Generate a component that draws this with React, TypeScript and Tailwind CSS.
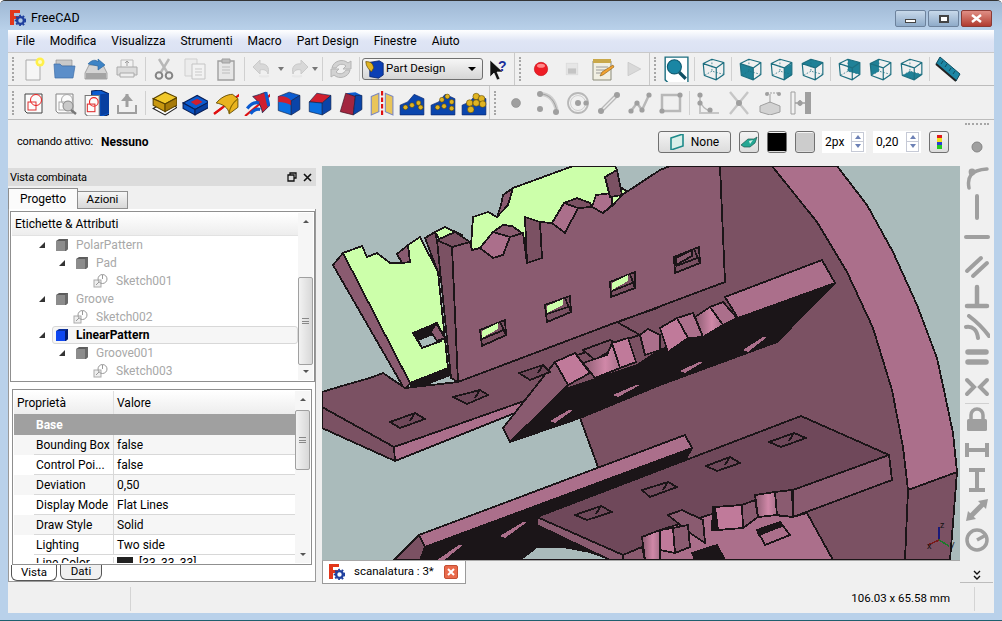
import React from 'react';

type P = { children?: React.ReactNode };
const Svg = ({ children, s = 24 }: P & { s?: number }) => (
  <svg width={s} height={s} viewBox="0 0 24 24" fill="none">{children}</svg>
);

const G = '#9f9f9f';
const GD = '#858585';
const TEAL = '#1d6f80';

const Logo = ({ s = 16 }: { s?: number }) => (
  <svg width={s} height={s} viewBox="0 0 16 16">
    <path d="M0 0h10v3H4v3h5v3H4v6H0z" fill="#e2361a" />
    <circle cx="10.5" cy="10.5" r="3.4" fill="none" stroke="#1f3f9e" strokeWidth="2.4" />
    <circle cx="10.5" cy="10.5" r="5" fill="none" stroke="#1f3f9e" strokeWidth="1.6" strokeDasharray="1.8 1.8" />
  </svg>
);

// view cube, the faces are filled according to the view
const ViewCube = ({ face }: { face?: string }) => (
  <Svg s={26}>
    {face === 'front' && <path d="M3 7l12 4v11L4 18z" fill="#1f8197" />}
    {face === 'right' && <path d="M15 11l7-4v11l-7 4z" fill="#1f8197" />}
    {face === 'top' && <path d="M3 7l8-4 11 3-7 5z" fill="#1f8197" />}
    {face === 'rear' && <path d="M11 3l11 3v11L11 14z" fill="#1f8197" />}
    {face === 'left' && <path d="M3 7l8-4v11l-7 4z" fill="#1f8197" />}
    {face === 'bottom' && <path d="M4 18l7-4 11 3-7 5z" fill="#1f8197" />}
    <path d="M3 7l8-4 11 3v11l-7 5-11-4zM3 7l12 4 7-5M15 11v11" stroke={TEAL} strokeWidth="1.1" strokeLinejoin="round" />
    <path d="M11 3v11l11 3M11 14l-7 4" stroke={TEAL} strokeWidth=".7" strokeDasharray="1.5 1.5" />
  </Svg>
);

const Page = ({ faded }: { faded?: boolean }) => (
  <>
    <path d="M3 3h17v19H5l-2-2z" fill="#fbfbfb" stroke={faded ? GD : '#444'} />
    <rect x="6" y="11" width="8" height="8" fill="none" stroke={faded ? '#a8a8a8' : '#d33'} />
    <circle cx="14" cy="9" r="5.5" fill="none" stroke={faded ? '#a8a8a8' : '#e22'} />
  </>
);

const Pattern = ({ n }: { n: number }) => (
  <Svg s={26}>
    <path d="M1 14l7-3 6-7 9 4v15H1z" fill="#0a45ad" stroke="#08246a" strokeWidth=".6" />
    {(n === 1
      ? [[6, 16], [12, 14], [18, 12], [20, 16]]
      : n === 2
        ? [[7, 16], [11, 9], [16, 6], [20, 11], [20, 17], [13, 15]]
        : [[8, 12], [14, 6], [19, 8], [14, 12], [20, 13], [9, 18]]
    ).map(([x, y], i) => (
      <circle key={i} cx={x} cy={y} r={n === 3 ? 3 : 2.2} fill="#e0b422" stroke="#5a4300" strokeWidth=".5" />
    ))}
  </Svg>
);

const icons: Record<string, React.ReactNode> = {
  new: (
    <Svg>
      <path d="M4 3h14v20H4z" fill="#f6f6f6" stroke="#aaa" />
      <circle cx="18" cy="5" r="4.5" fill="#fff04a" />
      <circle cx="18" cy="5" r="2" fill="#fffdc0" />
    </Svg>
  ),
  open: (
    <Svg>
      <path d="M3 3h16v6H3z" fill="#c9c9c9" stroke="#888" strokeWidth=".6" />
      <path d="M1 7h6l2 2h13l-2 12H2z" fill="#5b8ec9" stroke="#3d6da8" strokeWidth=".7" />
    </Svg>
  ),
  save: (
    <Svg>
      <path d="M1 16l4-8h14l4 8v6H1z" fill="#d4d4d4" stroke="#888" strokeWidth=".7" />
      <path d="M2 16h20v6H2z" fill="#a4a4a4" />
      <path d="M4 7c3-4 8-5 10-2v-3l7 6-7 5V9c-3-1-7-1-10-2z" fill="#3d84c6" stroke="#215e99" strokeWidth=".6" />
    </Svg>
  ),
  print: (
    <Svg>
      <path d="M6 3h12v8H6z" fill="#f2f2f2" stroke="#bbb" />
      <path d="M2 10h20v8H2z" fill="#dcdcdc" stroke="#aaa" />
      <path d="M5 16h14v4H5z" fill="#eee" stroke="#aaa" />
      <path d="M12 4v5M10 6l2-2 2 2" stroke={G} />
    </Svg>
  ),
  cut: (
    <Svg>
      <path d="M7 2l8 13M17 2L9 15" stroke="#b8b8b8" strokeWidth="2.4" />
      <circle cx="7" cy="18.5" r="3.3" stroke={GD} strokeWidth="2" />
      <circle cx="17" cy="18.5" r="3.3" stroke={GD} strokeWidth="2" />
    </Svg>
  ),
  copy: (
    <Svg>
      <path d="M2 2h12v17H2z" fill="#ececec" stroke="#cfcfcf" />
      <path d="M9 7h13v15H9z" fill="#f2f2f2" stroke="#c4c4c4" />
      <path d="M12 12h7M12 15h7M12 18h7" stroke="#c9c9c9" />
    </Svg>
  ),
  paste: (
    <Svg>
      <path d="M4 4h16v19H4z" fill="#e6e6e6" stroke={G} strokeWidth="1.4" />
      <path d="M8 2h8v4H8z" fill="#bcbcbc" stroke={G} />
      <path d="M8 10h8M8 13h8M8 16h8" stroke="#bcbcbc" />
    </Svg>
  ),
  undo: (
    <Svg>
      <path d="M9 3L2 10l7 7v-4c4-1 7 0 8 4 2-7-2-11-8-10z" fill="#d8d8d8" stroke="#cacaca" />
      <path d="M8 19a8 2 0 0 0 10 0" stroke="#e8e8e8" strokeWidth="2" />
    </Svg>
  ),
  redo: (
    <Svg>
      <path d="M15 3l7 7-7 7v-4c-4-1-7 0-8 4-2-7 2-11 8-10z" fill="#d8d8d8" stroke="#cacaca" />
      <path d="M16 19a8 2 0 0 1-10 0" stroke="#e8e8e8" strokeWidth="2" />
    </Svg>
  ),
  refresh: (
    <Svg>
      <path d="M3 11C4 4 14 1 19 6l3-2v8h-8l3-3c-3-3-8-2-10 2zM21 13c-1 7-11 10-16 5l-3 2v-8h8l-3 3c3 3 8 2 10-2z" fill="#d2d2d2" stroke="#b4b4b4" />
    </Svg>
  ),
  help: (
    <svg width="20" height="22" viewBox="0 0 20 22">
      <path d="M1 2v17l4-4 3 7 3-1-3-7h6z" fill="#111" stroke="#fff" strokeWidth=".6" />
      <text x="9" y="13" fontSize="14" fontWeight="700" fontFamily="'Liberation Sans', sans-serif" fill="#1b2f9c">?</text>
    </svg>
  ),
  record: (
    <Svg s={16}>
      <circle cx="12" cy="12" r="10" fill="#ee1c25" stroke="#c9151d" />
      <ellipse cx="12" cy="7" rx="6" ry="3" fill="#f88" />
    </Svg>
  ),
  stop: (
    <Svg s={14}>
      <rect x="2" y="2" width="20" height="20" fill="#e6e6e6" stroke="#d6d6d6" />
      <rect x="5" y="11" width="14" height="9" fill="#c4c4c4" />
    </Svg>
  ),
  macro: (
    <Svg>
      <path d="M2 4h18v19H2z" fill="#f1efe2" stroke="#8b8b7a" />
      <path d="M2 2h18v4H2z" fill="#c9a84a" />
      <path d="M5 10h12M5 13h10M5 16h7" stroke="#9a9a9a" />
      <path d="M9 19l2-4 11-7 1 2-11 8z" fill="#f2a332" stroke="#8a5a10" strokeWidth=".6" />
    </Svg>
  ),
  play: (
    <Svg s={18}>
      <path d="M4 3l17 9-17 9z" fill="#d9d9d9" stroke="#c6c6c6" />
    </Svg>
  ),
  fit: (
    <Svg s={26}>
      <path d="M2 1h21v24H5l-3-3z" fill="#fff" stroke={TEAL} strokeWidth="1.3" />
      <circle cx="10.5" cy="10" r="6.5" fill="#1a86a4" stroke="#0e5a70" />
      <path d="M15 15l6 6" stroke="#0e4f63" strokeWidth="3" />
    </Svg>
  ),
  ruler: (
    <svg width="26" height="26" viewBox="0 0 26 26">
      <path d="M5 1l20 17-4 7L1 8z" fill="#1c87a5" stroke="#0f4c5e" />
      <path d="M1 8l20 17" stroke="#222" strokeWidth="2" />
      <path d="M8 5l-2 3M12 8l-2 3M16 12l-2 3M20 15l-2 3" stroke="#0f4c5e" />
    </svg>
  ),
  sketch: (
    <Svg>
      <Page />
    </Svg>
  ),
  viewsketch: (
    <Svg>
      <Page faded />
      <circle cx="15" cy="15" r="5" fill="#c9c9c9" stroke="#888" />
      <path d="M18 19l5 4" stroke="#777" strokeWidth="2.5" />
    </Svg>
  ),
  mapsketch: (
    <Svg s={26}>
      <path d="M8 1l8-1 9 4v18l-7 3-10-3z" fill="#0b5bd0" stroke="#0a1f55" />
      <path d="M16 4l9-1v18l-9 3z" fill="#083fa0" />
      <path d="M2 5h13v19H4l-2-2z" fill="#fbfbfb" stroke="#777" />
      <rect x="4" y="13" width="7" height="7" fill="none" stroke="#d33" />
      <circle cx="10" cy="11" r="4" fill="none" stroke="#e22" />
    </Svg>
  ),
  leave: (
    <Svg>
      <path d="M12 3v13" stroke={G} strokeWidth="3" />
      <path d="M6 10l6-7 6 7z" fill={G} />
      <path d="M3 14v8h18v-8" stroke={G} strokeWidth="2" />
    </Svg>
  ),
  pad: (
    <Svg s={26}>
      <path d="M2 17l11-6 11 5-11 7z" fill="#fff" stroke="#222" />
      <path d="M2 8l11-6 11 5-11 6z" fill="#f1c82a" stroke="#5a4300" />
      <path d="M2 8v6l11 6v-7z" fill="#c8970f" stroke="#5a4300" />
      <path d="M13 13v7l11-6V7z" fill="#a67a08" stroke="#5a4300" />
    </Svg>
  ),
  pocket: (
    <Svg s={26}>
      <path d="M1 12l13-7 11 6-13 7z" fill="#0b5bd0" stroke="#0a1f55" />
      <path d="M8 11l6-3 5 3-6 3z" fill="#d01f2e" />
      <path d="M1 12v5l11 6v-5z" fill="#0a55c4" stroke="#0a1f55" />
      <path d="M12 18v5l13-7v-5z" fill="#083fa0" stroke="#0a1f55" />
    </Svg>
  ),
  revolve: (
    <Svg s={26}>
      <path d="M1 22L25 4" stroke="#e01010" strokeWidth="2" />
      <path d="M3 12c4-5 10-8 15-8l5 4v8l-8 6c-1-6-6-9-12-10z" fill="#e9b41f" stroke="#5a4300" strokeWidth=".8" />
      <path d="M15 22c0-5 2-9 8-14" stroke="#8a6a00" strokeWidth="1" />
      <path d="M1 22L9 16" stroke="#e01010" strokeWidth="2" />
    </Svg>
  ),
  groove: (
    <Svg s={26}>
      <path d="M1 24L25 4" stroke="#e01010" strokeWidth="2" />
      <path d="M8 6c4-1 9-3 12-4l3 13-6 6c-1-6-4-11-9-15z" fill="#d01f2e" stroke="#10204a" strokeWidth=".7" />
      <path d="M3 17c4-5 8-6 11-5M6 22c3-4 6-5 9-4" stroke="#0b5bd0" strokeWidth="3" />
      <path d="M20 2l3 13" stroke="#0b5bd0" strokeWidth="3" />
    </Svg>
  ),
  fillet: (
    <Svg s={26}>
      <path d="M3 6l10-4 10 3-8 5z" fill="#0b5bd0" stroke="#10204a" strokeWidth=".6" />
      <path d="M3 6l12 4v13L3 19z" fill="#0b6fe0" stroke="#10204a" strokeWidth=".6" />
      <path d="M3 6c5-1 10 1 12 4v4c-4-2-8-3-12-3z" fill="#d01f2e" />
      <path d="M15 10l8-5v13l-8 5z" fill="#0a44a8" stroke="#10204a" strokeWidth=".6" />
    </Svg>
  ),
  chamfer: (
    <Svg s={26}>
      <path d="M3 11l7-8 13 2-8 7z" fill="#d01f2e" stroke="#10204a" strokeWidth=".6" />
      <path d="M3 11l12 1v11L3 20z" fill="#0b6fe0" stroke="#10204a" strokeWidth=".6" />
      <path d="M15 12l8-7v13l-8 5z" fill="#0a44a8" stroke="#10204a" strokeWidth=".6" />
    </Svg>
  ),
  draft: (
    <Svg s={26}>
      <path d="M8 3l9-1 6 3-6 2z" fill="#0b5bd0" />
      <path d="M8 3l9 3-2 17-12-3z" fill="#a3263f" stroke="#3b1020" strokeWidth=".6" />
      <path d="M17 5l6 0v13l-8 5z" fill="#0a44a8" stroke="#10204a" strokeWidth=".6" />
    </Svg>
  ),
  mirror: (
    <Svg s={26}>
      <path d="M3 6l7-3v17l-7 3z" fill="#e9c55a" stroke="#7a86c0" />
      <path d="M23 6l-7-3v17l7 3z" fill="#e9c55a" stroke="#7a86c0" />
      <path d="M13 1v24" stroke="#e01010" strokeWidth="2" strokeDasharray="4 2" />
    </Svg>
  ),
  linear: <Pattern n={1} />,
  polar: <Pattern n={2} />,
  multi: <Pattern n={3} />,
  point: (
    <Svg s={12}>
      <circle cx="12" cy="12" r="9" fill={G} stroke={GD} />
    </Svg>
  ),
  arcpts: (
    <Svg>
      <path d="M5 3c9 0 15 6 17 18" stroke="#cdcdcd" strokeWidth="4" />
      <path d="M5 3c9 0 15 6 17 18" stroke={G} strokeWidth="1" />
      <circle cx="5" cy="3" r="3" fill={G} />
      <circle cx="5" cy="18" r="3" fill={G} />
      <circle cx="21" cy="21" r="3" fill={G} />
    </Svg>
  ),
  circle: (
    <Svg>
      <circle cx="12" cy="12" r="10" stroke="#b8b8b8" strokeWidth="1.8" />
      <circle cx="12" cy="12" r="7.5" stroke="#d0d0d0" />
      <circle cx="12" cy="12" r="3" fill={G} />
      <circle cx="20" cy="12" r="2.6" fill={G} />
    </Svg>
  ),
  line: (
    <Svg>
      <path d="M3 21L20 4" stroke="#b8b8b8" strokeWidth="4" />
      <path d="M3 21L20 4" stroke="#eee" strokeWidth="1.5" />
      <circle cx="4" cy="20" r="3" fill={G} />
      <circle cx="20" cy="4" r="3" fill={G} />
    </Svg>
  ),
  polyline: (
    <Svg>
      <path d="M3 20l6-8 5 7 7-15" stroke="#b8b8b8" strokeWidth="2.5" />
      <circle cx="3" cy="20" r="2.6" fill={G} />
      <circle cx="9" cy="12" r="2.6" fill={G} />
      <circle cx="14" cy="19" r="2.6" fill={G} />
      <circle cx="21" cy="4" r="2.6" fill={G} />
    </Svg>
  ),
  rect: (
    <Svg>
      <rect x="3" y="4" width="18" height="16" stroke="#b8b8b8" strokeWidth="2.5" />
      <circle cx="21" cy="4" r="2.6" fill={G} />
      <circle cx="3" cy="20" r="2.6" fill={G} />
    </Svg>
  ),
  fillet2: (
    <Svg>
      <path d="M4 3v19h19" stroke="#c6c6c6" strokeWidth="2" />
      <path d="M4 9c1 6 6 10 12 12" stroke="#b8b8b8" strokeWidth="1.5" />
      <circle cx="4" cy="4" r="2.6" fill={G} />
      <circle cx="4" cy="12" r="2.6" fill={G} />
      <circle cx="14" cy="19" r="2.6" fill={G} />
    </Svg>
  ),
  trim: (
    <Svg>
      <path d="M3 1l18 22M21 1L3 23" stroke="#c6c6c6" strokeWidth="2.4" />
      <circle cx="12" cy="12" r="3" fill={G} />
    </Svg>
  ),
  external: (
    <Svg>
      <path d="M2 15l10-4 10 4v6l-10 3-10-3z" fill="#d2d2d2" stroke={G} />
      <path d="M9 2h12" stroke={G} strokeDasharray="2 1" />
      <circle cx="9" cy="3" r="2" fill={G} />
      <circle cx="21" cy="3" r="2" fill={G} />
      <path d="M12 3v9" stroke={G} />
    </Svg>
  ),
  carbon: (
    <Svg>
      <path d="M2 1h4v22H2z" fill="#f2f2f2" stroke={G} />
      <path d="M16 1h6v22h-6z" fill={G} />
      <path d="M6 12h10M11 9v6" stroke={G} strokeWidth="1.6" />
      <circle cx="11" cy="12" r="2.6" fill={G} />
    </Svg>
  ),
};

const Slot = ({ n, w = 31 }: { n?: string; w?: number }) => (
  <div className="flex items-center justify-center shrink-0 h-full" style={{ width: w }}>
    {n && icons[n]}
  </div>
);
const Sep = () => (
  <div className="w-[6px] h-full flex justify-center items-center shrink-0">
    <div className="w-px h-[24px] bg-[#d0d0d0]" />
  </div>
);
const Handle = () => (
  <div className="w-[10px] shrink-0 h-full flex justify-center items-center">
    <div className="h-[24px] w-[3px] border-l-2 border-dotted border-[#a6a6a6]" />
  </div>
);
const DropArrow = ({ w }: { w: number }) => (
  <div className="flex items-center justify-center shrink-0 h-full" style={{ width: w }}>
    <div className="w-0 h-0 border-x-[3px] border-x-transparent border-t-[4px] border-t-[#777]" />
  </div>
);
const ViewBtn = ({ face }: { face?: string }) => (
  <div className="w-[31px] h-full flex items-center justify-center shrink-0"><ViewCube face={face} /></div>
);

const Toolbar1 = () => (
  <div className="h-[34px] flex items-center bg-[#f0f0f0] border-b border-[#bcbcbc] border-t border-t-[#c9c9c9]">
    <Handle />
    <Slot n="new" /><Slot n="open" /><Slot n="save" /><Slot n="print" />
    <Sep />
    <Slot n="cut" /><Slot n="copy" /><Slot n="paste" />
    <Sep />
    <Slot n="undo" /><DropArrow w={6} /><Slot n="redo" w={27} /><DropArrow w={8} />
    <Sep />
    <Slot n="refresh" />
    <Sep />
    <div className="w-[121px] h-[22px] shrink-0 flex items-center rounded-[3px] border border-[#6f6f6f] bg-gradient-to-b from-[#f6f6f6] to-[#d6d6d6] pl-[2px]">
      <svg width="19" height="19" viewBox="0 0 24 24" className="shrink-0">
        <path d="M6 3l12-2 5 3v15l-6 4-11-2z" fill="#0b3fb4" stroke="#08246a" />
        <path d="M1 2c7 0 9 3 10 8l-3 5C5 12 1 8 1 2z" fill="#e0b422" stroke="#5a4300" strokeWidth=".8" />
      </svg>
      <span className="ml-[2px] flex-1 text-black text-[11.5px]">Part Design</span>
      <div className="mr-[6px] w-0 h-0 border-x-[4px] border-x-transparent border-t-[4px] border-t-black" />
    </div>
    <Slot n="help" />
    <div className="w-px h-full bg-[#c9c9c9]" />
    <Handle />
    <Slot n="record" /><Slot n="stop" /><Slot n="macro" /><Slot n="play" />
    <div className="w-px h-full bg-[#c9c9c9]" />
    <Handle />
    <Slot n="fit" />
    <Sep />
    <ViewBtn />
    <Sep />
    <ViewBtn face="front" /><ViewBtn face="right" /><ViewBtn face="top" />
    <Sep />
    <ViewBtn face="rear" /><ViewBtn face="left" /><ViewBtn face="bottom" />
    <Sep />
    <Slot n="ruler" />
  </div>
);

const Toolbar2 = () => (
  <div className="h-[34px] flex items-center bg-[#f0f0f0] border-b border-[#bcbcbc]">
    <Handle />
    <Slot n="sketch" /><Slot n="viewsketch" /><Slot n="mapsketch" /><Slot n="leave" />
    <Sep />
    {['pad', 'pocket', 'revolve', 'groove', 'fillet', 'chamfer', 'draft', 'mirror', 'linear', 'polar', 'multi'].map((n) => (
      <Slot key={n} n={n} />
    ))}
    <div className="w-px h-full bg-[#c9c9c9]" />
    <Handle />
    {['point', 'arcpts', 'circle', 'line', 'polyline', 'rect'].map((n) => (
      <Slot key={n} n={n} />
    ))}
    <Sep />
    {['fillet2', 'trim', 'external', 'carbon'].map((n) => (
      <Slot key={n} n={n} />
    ))}
  </div>
);

const SpinBox = ({ value, w }: { value: string; w: number }) => (
  <div className="h-[22px] flex items-center bg-white shrink-0 pl-[3px]" style={{ width: w }}>
    <span className="flex-1">{value}</span>
    <div className="w-[13px] mr-[2px] h-[20px] flex flex-col border border-[#c6cad6]">
      <div className="flex-1 flex items-center justify-center border-b border-[#c6cad6]">
        <div className="w-0 h-0 border-x-[3px] border-x-transparent border-b-[4px] border-b-[#6c80b5]" />
      </div>
      <div className="flex-1 flex items-center justify-center">
        <div className="w-0 h-0 border-x-[3px] border-x-transparent border-t-[4px] border-t-[#6c80b5]" />
      </div>
    </div>
  </div>
);

const SquareBtn = ({ children }: P) => (
  <div className="w-[20px] h-[22px] shrink-0 flex items-center justify-center rounded-[3px] border border-[#707070] bg-gradient-to-b from-[#f4f4f4] to-[#dcdcdc]">
    {children}
  </div>
);

const DrawStyleBar = () => (
  <div className="h-[46px] shrink-0 bg-[#f0f0f0] flex items-center pl-[9px] pr-[11px] pb-[3px]">
    <span className="w-[84px] shrink-0 text-[11px] tracking-[-0.2px]">comando attivo:</span>
    <span className="font-bold">Nessuno</span>
    <div className="flex-1" />
    <div className="w-[73px] h-[22px] flex items-center justify-center gap-[7px] rounded-[3px] border border-[#707070] bg-gradient-to-b from-[#f4f4f4] to-[#dcdcdc]">
      <svg width="14" height="16" viewBox="0 0 14 16">
        <path d="M1 4l12-4v12L1 16z" fill="#d8efe9" stroke="#1d8a8a" strokeWidth="1.6" />
      </svg>
      <span>None</span>
    </div>
    <div className="w-[8px]" />
    <SquareBtn>
      <svg width="18" height="12" viewBox="0 0 18 12">
        <path d="M1 9l7-6h6l3-2-2 6-5 4H4z" fill="#25a793" stroke="#1c5a52" strokeWidth=".7" />
        <path d="M9 5l4-1-3 4" fill="#d6f3ec" />
      </svg>
    </SquareBtn>
    <div className="w-[8px]" />
    <SquareBtn><div className="w-[18px] h-[18px] bg-black" /></SquareBtn>
    <div className="w-[8px]" />
    <SquareBtn><div className="w-[18px] h-[18px] bg-[#cccccc]" /></SquareBtn>
    <div className="w-[7px]" />
    <SpinBox value="2px" w={44} />
    <div className="w-[7px]" />
    <SpinBox value="0,20" w={48} />
    <div className="w-[8px]" />
    <SquareBtn>
      <div className="w-[5px] h-[14px] flex flex-col">
        <div className="flex-1 bg-[#e01b1b]" /><div className="flex-1 bg-[#f2e21a]" />
        <div className="flex-1 bg-[#2a3cd0]" /><div className="flex-1 bg-[#22c922]" />
      </div>
    </SquareBtn>
  </div>
);

const SmallArrow = ({ up }: { up?: boolean }) => (
  <div className={`w-0 h-0 border-x-[3px] border-x-transparent ${up ? 'border-b-[3px] border-b-[#555]' : 'border-t-[3px] border-t-[#555]'}`} />
);

const ScrollBar = ({ top, h }: { top: number; h: number }) => (
  <div className="w-[15px] shrink-0 h-full bg-[#f6f6f6] flex flex-col items-center relative">
    <div className="h-[17px] flex items-center justify-center shrink-0"><SmallArrow up /></div>
    <div className="flex-1" />
    <div className="h-[17px] flex items-center justify-center shrink-0"><SmallArrow /></div>
    <div className="absolute left-0 w-[15px] rounded-[2px] border border-[#a0a0a0] bg-gradient-to-r from-[#f2f2f2] to-[#d8d8d8] flex items-center justify-center" style={{ top, height: h }}>
      <div className="w-[7px] h-[6px] border-y border-[#888] flex items-center"><div className="w-full h-px bg-[#888]" /></div>
    </div>
  </div>
);

const TreeCube = ({ active }: { active?: boolean }) => (
  <svg width="14" height="14" viewBox="0 0 14 14" className="shrink-0">
    <path d="M1 3l3-2h9v10l-2 2H1z" fill={active ? '#0b2f9a' : '#5c5c5c'} />
    <path d="M1 3h9v10H1z" fill={active ? '#0f47f0' : '#8c8c8c'} />
    <path d="M10 3l3-2v10l-3 2z" fill={active ? '#041c6e' : '#6a6a6a'} />
  </svg>
);
const TreeSketch = () => (
  <svg width="16" height="16" viewBox="0 0 16 16" className="shrink-0">
    <rect x="1" y="7" width="7" height="7" fill="#eee" stroke="#aaa" />
    <circle cx="9.5" cy="6" r="4.5" fill="none" stroke="#999" />
    <path d="M9.5 6V2M3 12l3-3" stroke="#999" />
  </svg>
);
const rows = [
  { label: 'PolarPattern', d: 0, k: 'c' },
  { label: 'Pad', d: 1, k: 'c' },
  { label: 'Sketch001', d: 2, k: 's' },
  { label: 'Groove', d: 0, k: 'c' },
  { label: 'Sketch002', d: 1, k: 's' },
  { label: 'LinearPattern', d: 0, k: 'c', active: true },
  { label: 'Groove001', d: 1, k: 'c' },
  { label: 'Sketch003', d: 2, k: 's' },
];

const Tree = () => (
  <div className="ml-[1px] w-[305px] h-[171px] border border-[#8f8f8f] bg-white flex p-px">
    <div className="flex-1 min-w-0 flex flex-col">
      <div className="h-[23px] shrink-0 pl-[3px] flex items-center bg-gradient-to-b from-white to-[#ededed] border-b border-[#e2e2e2]">
        Etichette &amp; Attributi
      </div>
      <div className="flex flex-col">
        {rows.map((r) => (
          <div key={r.label} className="h-[18px] flex items-center relative" style={{ paddingLeft: r.k === 's' ? 41 + r.d * 20 : 27 + r.d * 20 }}>
            {r.active && <div className="absolute left-[40px] right-0 top-0 h-[18px] rounded-[3px] border border-[#d8d8d8] bg-[#f6f6f6]" />}
            {r.k === 'c' && <div className="relative w-0 h-0 border-l-[6px] border-l-transparent border-b-[6px] border-b-[#333] mr-[10px]" />}
            {r.k === 'c' ? <div className="relative"><TreeCube active={r.active} /></div> : <TreeSketch />}
            <span className={`relative ml-[7px] ${r.active ? 'font-bold text-black' : 'text-[#a8a8a8]'}`}>{r.label}</span>
          </div>
        ))}
      </div>
    </div>
    <ScrollBar top={64} h={88} />
  </div>
);

const props = [
  ['Bounding Box', 'false'],
  ['Control Poi...', 'false'],
  ['Deviation', '0,50'],
  ['Display Mode', 'Flat Lines'],
  ['Draw Style', 'Solid'],
  ['Lighting', 'Two side'],
];

const PropPanel = () => (
  <div className="ml-[3px] w-[300px] h-[176px] shrink-0 border border-[#8f8f8f] bg-white flex p-px overflow-hidden">
    <div className="flex-1 min-w-0 flex flex-col overflow-hidden">
      <div className="h-[23px] shrink-0 flex items-center bg-gradient-to-b from-white to-[#ededed]">
        <span className="w-[100px] pl-[3px] border-r border-[#e0e0e0] h-full flex items-center">Proprietà</span>
        <span className="pl-[3px]">Valore</span>
      </div>
      <div className="h-[21px] shrink-0 bg-[#a0a0a0] text-white font-bold pl-[22px] flex items-center">Base</div>
      {props.map(([k, v], i) => (
        <div key={k} className={`h-[20px] shrink-0 flex items-center ${i % 2 === 0 ? 'bg-[#f6f6f6]' : 'bg-white'}`}>
          <div className="w-[20px] h-full shrink-0" />
          <div className="w-[80px] h-full pl-[2px] flex items-center whitespace-nowrap border-b border-r border-[#d8d8d8] shrink-0">{k}</div>
          <div className="flex-1 h-full pl-[3px] flex items-center border-b border-[#d8d8d8]">{v}</div>
        </div>
      ))}
      <div className="h-[8px] shrink-0 flex items-start pt-[2px] overflow-hidden">
        <div className="w-[20px] shrink-0" />
        <div className="w-[80px] pl-[2px] whitespace-nowrap border-r border-[#d8d8d8] shrink-0">Line Color</div>
        <div className="pl-[3px] flex items-start gap-[6px]">
          <div className="w-[16px] h-[14px] bg-[#212121]" />
          <span>[33, 33, 33]</span>
        </div>
      </div>
    </div>
    <ScrollBar top={19} h={60} />
  </div>
);

const Dock = () => (
  <div className="w-[308px] shrink-0 flex flex-col h-[414px] mt-[2px]">
    <div className="h-[18px] shrink-0 bg-[#dcdcdc] flex items-center pl-[2px] pr-[4px]">
      <span className="flex-1 text-[11px] tracking-[-0.2px]">Vista combinata</span>
      <svg width="10" height="10" viewBox="0 0 10 10" className="mr-[6px]">
        <path d="M3 3V1h6v5H7M1 3h6v6H1z" fill="none" stroke="#111" strokeWidth="1.3" />
      </svg>
      <svg width="9" height="9" viewBox="0 0 9 9">
        <path d="M1 1l7 7M8 1L1 8" stroke="#111" strokeWidth="1.6" />
      </svg>
    </div>
    <div className="h-[21px] shrink-0 flex items-end relative z-10 mt-[2px]">
      <div className="w-[70px] h-[21px] bg-[#fbfbfb] border border-b-0 border-[#8f8f8f] flex items-center justify-center">Progetto</div>
      <div className="w-[50px] h-[18px] bg-gradient-to-b from-[#f6f6f6] to-[#d8d8d8] border border-l-0 border-[#8f8f8f] flex items-center justify-center text-[11.5px]">Azioni</div>
    </div>
    <div className="flex-1 min-h-0 bg-white border border-[#9a9a9a] border-t-0 flex flex-col pt-[2px]">
      <Tree />
      <div className="h-[7px] shrink-0" />
      <PropPanel />
      <div className="flex ml-[2px] h-[16px] gap-[3px] items-start shrink-0">
        <div className="w-[46px] h-[16px] border border-t-0 border-[#555] rounded-b-[6px] flex items-center justify-center text-[11.5px]">Vista</div>
        <div className="w-[42px] h-[15px] border border-t-0 border-[#555] rounded-b-[6px] bg-[#f0f0f0] flex items-center justify-center text-[11.5px]">Dati</div>
      </div>
    </div>
  </div>
);

// the model is the content of the picture: points are given in window coordinates
const C = {
  bg: '#aabbbb',
  green: '#ccffaa',
  mid: '#8a5b70',
  face: '#7b5163',
  ring: '#ab6f8b',
  dark: '#1b1518',
  low: '#6f485a',
  pink: '#c07a9a',
};
const shapes: [string, string][] = [
  // green back plates
  [C.green, '473,217 488,212 497,217 508,205 513,188 573,166 615,166 617,170 605,177 640,200 640,260 470,260'],
  [C.mid, '497,217 508,205 513,188 503,195 501,205'],
  [C.green, '435,232 445,227 462,235 455,240 440,240'],
  [C.face, '425,238 435,232 442,262 448,290 438,272'],
  [C.mid, '333,265 343,253 410,383 405,390'],
  [C.green, '343,253 362,246 367,257 377,253 390,263 402,263 408,245 420,237 438,272 448,368 410,383'],
  [C.mid, '397,254 408,245 410,262 402,263'],
  [C.dark, '410,383 448,368 450,375 412,390'],
  [C.dark, '413,333 437,323 445,338 422,348'],
  [C.bg, '418,340 436,333 441,341 422,348'],
  [C.mid, '436,323 445,338 437,341 431,332'],
  // big disc with the ring
  [C.ring, '772,166 837,166 867,205 893,252 917,305 937,358 945,395 953,433 957,472 953,523 950,560 905,560 908,490 903,447 892,390 873,328 847,272 817,222'],
  [C.face, '700,166 772,166 817,222 847,272 873,328 892,390 903,447 908,490 905,560 600,560 598,467 580,418 560,390 600,300'],
  [C.face, '908,490 957,472 953,523 950,560 905,560'],
  // back panel with the notches
  [C.ring, '480,248 493,232 510,237 508,258 495,260'],
  [C.mid, '493,232 510,237 522,233 512,226 503,225'],
  [C.face, '525,217 540,222 542,258 527,263'],
  [C.ring, '564,203 578,208 565,233 552,223'],
  [C.face, '564,203 578,208 592,207 590,203 577,198'],
  [C.ring, '596,195 612,193 612,205 603,213 592,207'],
  [C.face, '605,177 617,170 622,195 610,197'],
  [C.mid, '452,247 470,242 472,250 480,248 493,258 503,255 510,237 523,233 527,263 542,258 540,222 552,223 565,233 578,208 592,207 603,213 613,205 622,195 660,170 670,166 720,166 725,282 458,382'],
  [C.face, '437,240 452,247 458,382 451,378'],
  [C.face, '437,240 455,232 470,242 452,247'],
  // tray below the panel
  [C.face, '322,392 345,385 370,378 383,373 405,388 458,382 617,322 640,335 555,362 527,400 394,447 322,407'],
  [C.face, '322,407 394,447 395,461 322,428'],
  [C.ring, '394,447 527,400 515,413 395,461'],
  // inclined plate
  [C.dark, '835,283 777,342 660,385 580,418 510,442 557,392 637,365 660,350 700,335 738,318'],
  [C.mid, '503,428 555,362 568,385 510,442'],
  [C.ring, '725,297 822,260 835,283 738,318'],
  [C.face, '583,350 610,340 620,345 595,360'],
  [C.pink, '555,362 575,353 590,373 568,385'],
  [C.pink, '612,343 628,338 636,362 620,368'],
  [C.ring, '640,335 648,329 660,335 660,350 645,355'],
  [C.pink, '660,328 677,318 688,338 668,352'],
  [C.ring, '677,318 693,313 703,337 688,338'],
  ['url(#cyl)', '695,317 710,307 723,325 703,337'],
  [C.ring, '710,307 723,302 737,318 723,325'],
  ['url(#cyl)', '583,363 607,355 612,343 620,368 595,378'],
  // rib and lower plate
  [C.face, '394,560 419,535 425,547 420,560'],
  [C.dark, '425,547 692,448 680,470 537,517 537,525 600,556 563,547 537,547 520,560 420,560'],
  [C.ring, '419,535 685,435 692,448 425,547'],
  [C.bg, '520,560 537,547 563,547 590,552 612,560'],
  [C.low, '537,517 801,416 889,455 793,490 623,555'],
  [C.mid, '537,517 623,555 623,560 610,560 537,525'],
  [C.mid, '889,455 892,480 793,517 793,490'],
  [C.ring, '640,560 660,530 725,510 793,517 807,513 833,560'],
  [C.mid, '623,555 642,547 645,560 623,560'],
  [C.mid, '668,515 682,510 703,520 705,543 690,533'],
  [C.pink, '660,530 673,528 675,553 660,550'],
  [C.mid, '673,528 688,525 690,547 675,553'],
  [C.dark, '713,507 718,507 718,530 712,530'],
  [C.pink, '715,507 742,505 743,528 718,530'],
  [C.mid, '742,505 755,500 758,517 743,528'],
  ['url(#cyl)', '755,495 775,492 777,515 758,517'],
  [C.mid, '775,492 792,490 793,517 777,515'],
  ['url(#cyl)', '642,537 660,530 660,560 645,560'],
  [C.ring, '757,530 780,522 790,535 765,545'],
  [C.dark, '757,530 780,522 782,526 759,535'],
  [C.dark, '692,553 717,545 725,560 695,560'],
];
const holes: number[][] = [
  [390, 422, 415, 413, 425, 419, 400, 428],
  [453, 397, 480, 390, 488, 395, 467, 404],
  [519, 373, 543, 365, 550, 372, 530, 380],
  [769, 442, 794, 433, 806, 438, 781, 447],
  [706, 466, 730, 457, 740, 463, 717, 471],
  [642, 490, 668, 482, 677, 487, 650, 497],
  [575, 515, 601, 506, 612, 512, 587, 520],
];
const windows: number[][] = [
  [480, 330, 505, 320, 506, 335, 482, 346],
  [545, 305, 570, 296, 571, 312, 547, 322],
  [610, 282, 635, 272, 635, 288, 611, 297],
  [674, 257, 699, 247, 700, 263, 675, 273],
];
const slivers: number[][] = [
  [550, 418, 573, 410],
  [680, 368, 703, 362],
  [743, 347, 767, 337],
  [613, 392, 640, 385],
  [500, 533, 527, 522],
  [437, 557, 463, 545],
];

const Model = () => (
  <svg width="638" height="394" viewBox="322 166 638 394" shapeRendering="crispEdges" className="block shrink-0">
    <defs>
      <linearGradient id="cyl" x1="0" x2="1">
        <stop offset="0" stopColor="#8a5b70" />
        <stop offset=".6" stopColor="#d088a8" />
        <stop offset="1" stopColor="#a8708a" />
      </linearGradient>
    </defs>
    <rect x="322" y="166" width="638" height="394" fill={C.bg} />
    <g stroke="#1b1518" strokeWidth="1.8" strokeLinejoin="round">
      {shapes.map(([fill, pts], i) => (
        <polygon key={i} fill={fill} points={pts} />
      ))}
      {holes.map((h, i) => (
        <g key={i}>
          <polygon fill={C.low} points={h.join(' ')} />
          <line x1={h[2]} y1={h[3]} x2={h[2] - 5} y2={h[3] + 8} />
        </g>
      ))}
      {windows.map((h, i) => (
        <g key={i}>
          <polygon fill={C.face} points={h.join(' ')} />
          <polygon
            fill={i < 3 ? C.green : C.mid}
            points={`${h[0] + 2},${h[1] + 1} ${h[2] - 7},${h[3] + 3} ${h[2] - 7},${h[3] + 9} ${h[0] + 2},${h[1] + 8}`}
            stroke={i < 3 ? 'none' : '#1b1518'}
          />
          <line x1={h[0] + 2} y1={h[1] + 9} x2={h[4]} y2={h[5] - 6} />
          <line x1={h[2] - 5} y1={h[3] + 2} x2={h[4]} y2={h[5]} />
        </g>
      ))}
      <line x1="617" y1="322" x2="660" y2="307" />
      <line x1="617" y1="322" x2="640" y2="335" />
      <line x1="807" y1="513" x2="833" y2="560" />
    </g>
    {slivers.map(([a, b, c, d], i) => (
      <polygon key={i} fill={C.ring} points={`${a},${b + 3} ${c - 4},${d} ${c},${d} ${a + 5},${b + 5}`} />
    ))}
    <g strokeWidth="1.6">
      <line x1="939" y1="527" x2="939" y2="540" stroke="#1a1a7a" />
      <line x1="939" y1="540" x2="928" y2="545" stroke="#7a1a1a" />
      <line x1="939" y1="540" x2="949" y2="546" stroke="#1a7a2a" />
    </g>
    <g fontSize="9" fontFamily="'Liberation Sans', sans-serif" fill="#111">
      <text x="940" y="528">z</text>
      <text x="927" y="549">x</text>
      <text x="950" y="547">y</text>
    </g>
  </svg>
);

const ViewTabs = () => (
  <div className="h-[25px] shrink-0 flex bg-[#f0f0f0] border-t border-[#a8a8a8]">
    <div className="w-[144px] h-[23px] flex items-center bg-white border border-t-0 border-[#9a9a9a] pl-[6px]">
      <Logo />
      <span className="ml-[9px] w-[90px] shrink-0 whitespace-nowrap text-[11.5px]">scanalatura : 3*</span>
      <div className="w-[14px] h-[14px] rounded-[2px] bg-[#e96a4b] border border-[#c44f34] flex items-center justify-center">
        <svg width="8" height="8" viewBox="0 0 8 8">
          <path d="M1 1l6 6M7 1L1 7" stroke="#fff" strokeWidth="2" />
        </svg>
      </div>
    </div>
  </div>
);

const Ci = ({ children }: P) => (
  <div className="h-[30px] shrink-0 flex items-center justify-center">
    <svg width="26" height="26" viewBox="0 0 26 26" fill="none">{children}</svg>
  </div>
);
const RightBar = () => (
  <div className="w-[33px] shrink-0 flex flex-col items-center bg-[#f0f0f0] border-b border-[#bcbcbc] h-[463px]">
    <div className="h-[9px] w-[24px] mt-[3px] border-t-2 border-dotted border-[#a6a6a6] shrink-0" />
    <Ci><circle cx="13" cy="13" r="5" fill={G} stroke={GD} /></Ci>
    <Ci>
      <path d="M5 24C3 14 6 6 23 5" stroke={G} strokeWidth="3.5" strokeLinecap="round" />
      <circle cx="8" cy="8" r="3.4" fill={G} />
    </Ci>
    <Ci><path d="M13 2v22" stroke={G} strokeWidth="4" strokeLinecap="round" /></Ci>
    <Ci><path d="M2 13h22" stroke={G} strokeWidth="4" strokeLinecap="round" /></Ci>
    <Ci><path d="M3 17L17 4M9 22L23 9" stroke={G} strokeWidth="4" strokeLinecap="round" /></Ci>
    <Ci><path d="M13 3v18M3 22h20" stroke={G} strokeWidth="4.5" strokeLinecap="round" /></Ci>
    <Ci>
      <path d="M5 2c8 6 14 12 20 20" stroke={G} strokeWidth="4" strokeLinecap="round" />
      <path d="M2 13c7-1 11 3 12 11" stroke={G} strokeWidth="4" strokeLinecap="round" />
    </Ci>
    <Ci><path d="M4 8h18M4 18h18" stroke={G} strokeWidth="5.5" strokeLinecap="round" /></Ci>
    <Ci><path d="M3 6l7 7-7 7M23 6l-7 7 7 7" stroke={G} strokeWidth="4" strokeLinecap="round" /></Ci>
    <div className="w-[24px] h-px bg-[#d0d0d0] my-[1px] shrink-0" />
    <Ci>
      <rect x="3" y="12" width="20" height="12" rx="1.5" fill={G} />
      <path d="M7 12V8a6 6 0 0 1 12 0v4" stroke={G} strokeWidth="3.5" />
    </Ci>
    <Ci><path d="M3 6v14M23 6v14M3 13h20" stroke={G} strokeWidth="4" /></Ci>
    <Ci><path d="M5 3h16M5 23h16M13 3v20" stroke={G} strokeWidth="4" /></Ci>
    <Ci>
      <path d="M7 19L20 6" stroke={G} strokeWidth="5" />
      <path d="M2 24l2-10 8 8zM24 2l-10 2 8 8z" fill={G} />
    </Ci>
    <Ci>
      <circle cx="13" cy="13" r="10" stroke={G} strokeWidth="3.5" />
      <path d="M13 13l9-5" stroke={G} strokeWidth="3.5" />
    </Ci>
    <div className="flex-1 flex flex-col items-center justify-end pb-[2px]">
      <svg width="8" height="10" viewBox="0 0 8 10">
        <path d="M1 1l3 3 3-3M1 6l3 3 3-3" stroke="#111" strokeWidth="1.4" fill="none" />
      </svg>
    </div>
  </div>
);

const WinBtn = ({ w, children, close }: P & { w: number; close?: boolean }) => (
  <div
    className={`h-[17px] flex items-center justify-center rounded-[2px] border ${close ? 'border-[#8a3a34] bg-gradient-to-b from-[#e08f86] to-[#b03a2f]' : 'border-[#6d829c] bg-gradient-to-b from-[#c8d9ea] to-[#8fabc9]'}`}
    style={{ width: w }}
  >
    {children}
  </div>
);

export default function App() {
  return (
    <div
      className="w-[1002px] h-[621px] flex flex-col overflow-hidden text-black text-[12px] leading-none bg-[#b9d1ea] border-t border-[#333] border-b border-b-[#1f5f6f] rounded-t-[5px]"
      style={{ fontFamily: "Roboto, 'Liberation Sans', sans-serif" }}
    >
      <div className="h-[29px] shrink-0 flex pt-[9px] pl-[10px] pr-[10px] bg-gradient-to-b from-[#9fb8d4] to-[#b9d1ea]">
        <Logo />
        <span className="ml-[5px] text-[12.5px] mt-[2px]">FreeCAD</span>
        <div className="flex-1" />
        <div className="flex gap-[2px] items-start">
          <WinBtn w={31}><div className="w-[11px] h-[4px] border border-[#444] bg-white mt-[5px]" /></WinBtn>
          <WinBtn w={31}><div className="w-[10px] h-[8px] border-2 border-[#444] bg-white" /></WinBtn>
          <WinBtn w={31} close>
            <svg width="11" height="9" viewBox="0 0 11 9">
              <path d="M1 1l9 7M10 1L1 8" stroke="#fff" strokeWidth="2.4" />
            </svg>
          </WinBtn>
        </div>
      </div>
      <div className="flex-1 min-h-0 mx-[8px] mb-[7px] flex flex-col bg-[#f0f0f0]">
        <div className="h-[22px] shrink-0 flex items-center pl-[8px] gap-[15px] bg-gradient-to-b from-white via-[#dfe5f5] to-[#dbe2f3]">
          {['File', 'Modifica', 'Visualizza', 'Strumenti', 'Macro', 'Part Design', 'Finestre', 'Aiuto'].map((m) => (
            <span key={m}>{m}</span>
          ))}
        </div>
        <Toolbar1 />
        <Toolbar2 />
        <div className="flex-1 min-h-0 flex">
          <div className="w-[952px] shrink-0 flex flex-col">
            <DrawStyleBar />
            <div className="flex-1 min-h-0 flex">
              <Dock />
              <div className="w-[6px] shrink-0" />
              <div className="flex-1 min-w-0 flex flex-col">
                <Model />
                <ViewTabs />
              </div>
            </div>
          </div>
          <RightBar />
        </div>
        <div className="h-[29px] shrink-0 flex items-center bg-[#f0f0f0]">
          <div className="w-[123px] h-[24px] border-r border-[#d4d4d4]" />
          <div className="flex-1" />
          <span className="mr-[24px] text-[11.5px]">106.03 x 65.58 mm</span>
          <div className="w-px h-[24px] bg-[#d4d4d4] mr-[19px]" />
        </div>
      </div>
    </div>
  );
}
